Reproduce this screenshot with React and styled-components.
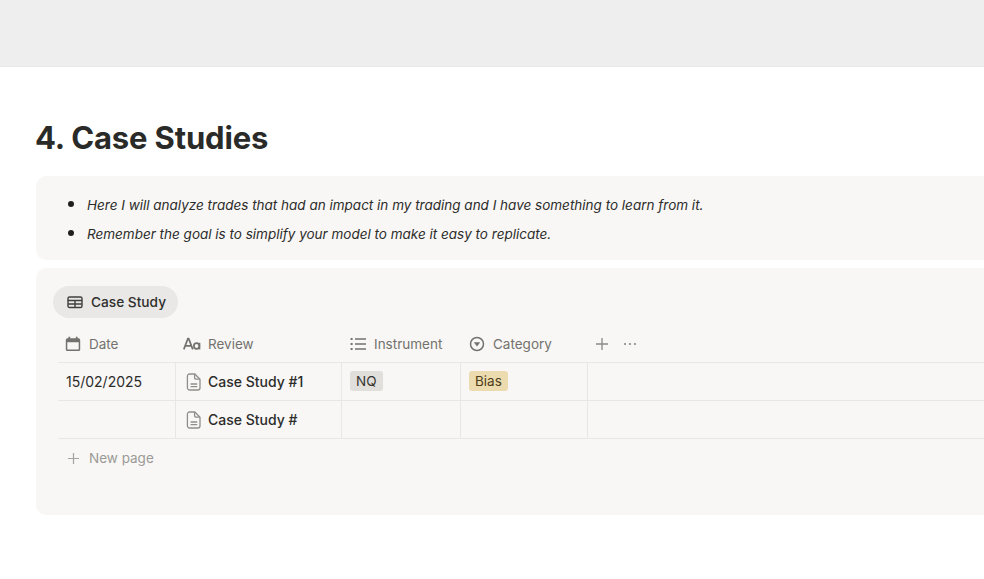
import React from "react";
import styled, { createGlobalStyle } from "styled-components";

const Global = createGlobalStyle`
  html, body { margin: 0; padding: 0; background: #fff; overflow: hidden; }
  body { font-family: Inter, "Liberation Sans", sans-serif; color: #2c2c2b; -webkit-font-smoothing: antialiased; }
`;
const Page = styled.div`width: 984px; height: 579px; overflow: hidden; background: #fff;`;
const Cover = styled.div`height: 67px; background: #eeeeee; border-bottom: 1px solid #e8e8e7; box-sizing: border-box;`;
const Content = styled.main`padding: 51px 0 0 36px; width: 1100px;`;
const Title = styled.h1`margin: 0 0 0 -1px; font-size: 31px; line-height: 40px; font-weight: 700; letter-spacing: -0.15px; color: #2a2a28;`;
const Callout = styled.ul`
  margin: 18px 0 0; height: 84px; box-sizing: border-box; padding: 13px 0 0 51px; background: #f8f7f5; border-radius: 10px;
  font-size: 13.5px; font-style: italic; line-height: 29px; color: #2c2c2b;
  li { height: 29px; } li::marker { font-size: 20px; color: #1f1f1e; }
`;
const Card = styled.section`margin-top: 8px; height: 247px; box-sizing: border-box; padding: 18px 0 0 17px; background: #f8f7f5; border-radius: 10px;`;
const Tab = styled.div`
  display: inline-flex; align-items: center; gap: 8px; height: 32px; padding: 0 12px 0 14px; box-sizing: border-box;
  border-radius: 16px; background: #e9e8e6; font-size: 13.7px; font-weight: 500; color: #2f2f2d;
`;
const Table = styled.div`margin: 8px 0 0 5px;`;
const Row = styled.div`display: grid; grid-template-columns: 117px 166px 119px 127px 1fr; height: ${p => p.$h}px; border-bottom: 1px solid #e8e7e5; box-sizing: border-box;`;
const Head = styled.div`display: flex; align-items: center; gap: ${p => p.$gap || 8}px; padding-left: ${p => p.$pad || 8}px; color: #73726e; font-size: 13.5px;`;
const Actions = styled.div`display: flex; align-items: center; gap: 14px; padding-left: 8px; color: #8a8985;`;
const Cell = styled.div`
  display: flex; align-items: center; gap: 6px; padding-left: ${p => p.$pad || 8}px;
  border-left: ${p => (p.$first ? "none" : "1px solid #e8e7e5")}; color: #2c2c2b; font-size: 14px;
  font-weight: ${p => (p.$strong ? 500 : 400)};
`;
const Tag = styled.span`
  display: inline-block; height: 20px; line-height: 20px; padding: 0 6px; border-radius: 3px; font-size: 13.5px;
  background: ${p => p.$bg}; color: ${p => p.$fg}; margin-top: -2px;
`;
const NewPage = styled.div`display: flex; align-items: center; gap: 9px; height: 38px; padding-left: 9px; color: #9b9a97; font-size: 13.5px;`;

const IconSvg = styled.svg`flex: none; display: block;`;
const TableIcon = () => (
  <IconSvg width="16" height="16" viewBox="0 0 16 16" fill="none" stroke="#3f3f3c" strokeWidth="1.4">
    <rect x="1" y="3" width="14" height="10.5" rx="1.6" />
    <path d="M1 6.5h14M1 10h14M8 6.5v7" />
  </IconSvg>
);
const CalIcon = () => (
  <IconSvg width="16" height="16" viewBox="0 0 16 16">
    <path fill="#73726e" d="M3.4.8h1.8v1.5h5.6V.8h1.8v1.5h1a1.6 1.6 0 0 1 1.6 1.6v9.5a1.6 1.6 0 0 1-1.6 1.6H2.4A1.6 1.6 0 0 1 .8 13.4V3.9a1.6 1.6 0 0 1 1.6-1.6h1zM2.3 6.2v7c0 .2.1.4.4.4h10.6c.3 0 .4-.2.4-.4v-7z" />
  </IconSvg>
);
const TextIcon = () => (
  <IconSvg width="18" height="14" viewBox="0 0 18 14" fill="none" stroke="#73726e" strokeWidth="1.7">
    <path d="M.8 12.4 4.9 1.6h.8L9.8 12.4M2.4 8.8h5.8" />
    <ellipse cx="13.6" cy="9" rx="2.7" ry="2.9" />
    <path d="M16.5 5.8v6.6" />
  </IconSvg>
);
const ListIcon = () => (
  <IconSvg width="16" height="14" viewBox="0 0 16 14" fill="none" stroke="#73726e" strokeWidth="1.4">
    <path d="M5 2h11M5 7h11M5 12h11" />
    <path d="M.6 2h2M.6 7h2M.6 12h2" strokeWidth="1.8" />
  </IconSvg>
);
const SelectIcon = () => (
  <IconSvg width="16" height="16" viewBox="0 0 16 16">
    <circle cx="8" cy="8" r="6.5" fill="none" stroke="#73726e" strokeWidth="1.5" />
    <path fill="#73726e" d="M4.8 6.2h6.4L8 10.4z" />
  </IconSvg>
);
const PlusIcon = ({ size = 14, color = "#8a8985" }) => (
  <IconSvg width={size} height={size} viewBox="0 0 14 14" fill="none" stroke={color} strokeWidth="1.3">
    <path d="M7 1v12M1 7h12" />
  </IconSvg>
);
const DotsIcon = () => (
  <IconSvg width="14" height="14" viewBox="0 0 14 14" fill="#8a8985">
    <circle cx="2" cy="7" r="1.1" /><circle cx="7" cy="7" r="1.1" /><circle cx="12" cy="7" r="1.1" />
  </IconSvg>
);
const DocIcon = () => (
  <IconSvg width="16" height="18" viewBox="0 0 16 18" fill="none" stroke="#8f8e8a" strokeWidth="1.3">
    <path d="M3.6 1h5.2L14 6.2v8.6a2.2 2.2 0 0 1-2.2 2.2H3.6a2.2 2.2 0 0 1-2.2-2.2V3.2A2.2 2.2 0 0 1 3.6 1z" />
    <path d="M8.6 1.2v3.3c0 1 .7 1.7 1.7 1.7H14M4.6 11h6.6M4.6 13.6h6.6" />
  </IconSvg>
);

export default function App() {
  return (
    <Page>
      <Global />
      <Cover />
      <Content>
        <Title>4. Case Studies</Title>
        <Callout>
          <li>Here I will analyze trades that had an impact in my trading and I have something to learn from it.</li>
          <li>Remember the goal is to simplify your model to make it easy to replicate.</li>
        </Callout>
        <Card>
          <Tab><TableIcon />Case Study</Tab>
          <Table>
            <Row $h={37}>
              <Head $pad={7}><CalIcon />Date</Head>
              <Head $pad={8} $gap={7}><TextIcon />Review</Head>
              <Head $pad={9}><ListIcon />Instrument</Head>
              <Head $pad={9}><SelectIcon />Category</Head>
              <Actions><PlusIcon /><DotsIcon /></Actions>
            </Row>
            <Row $h={38}>
              <Cell $first>15/02/2025</Cell>
              <Cell $strong $pad={10}><DocIcon />Case Study #1</Cell>
              <Cell><Tag $bg="#e0dfdc" $fg="#37352f">NQ</Tag></Cell>
              <Cell><Tag $bg="#ecdbae" $fg="#4f3d1a">Bias</Tag></Cell>
              <Cell />
            </Row>
            <Row $h={38}>
              <Cell $first />
              <Cell $strong $pad={10}><DocIcon />Case Study #</Cell>
              <Cell />
              <Cell />
              <Cell />
            </Row>
            <NewPage><PlusIcon size={13} color="#a5a4a0" />New page</NewPage>
          </Table>
        </Card>
      </Content>
    </Page>
  );
}
